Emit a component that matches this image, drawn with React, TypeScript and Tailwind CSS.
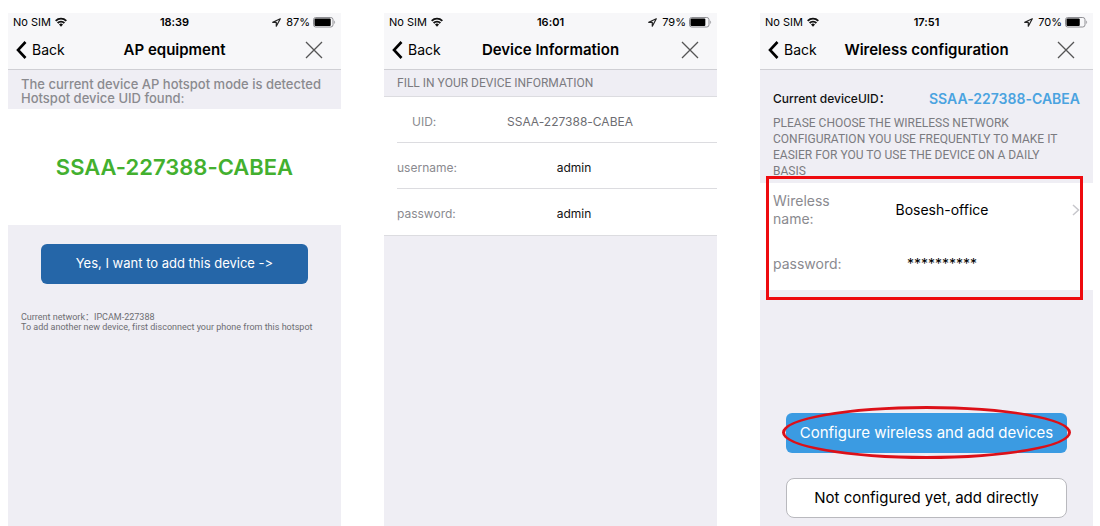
import { useState } from "react";
import type { ReactNode } from "react";

interface PhoneProps {
  time: string;
  battery: number;
  title: string;
  children: ReactNode;
}

const UID = "SSAA-227388-CABEA";

const WifiIcon = () => (
  <svg width="12" height="10" viewBox="0 0 12 10" aria-hidden="true">
    <path
      d="M0.7 3.8a7.5 7.5 0 0 1 10.6 0M2.6 6a4.8 4.8 0 0 1 6.8 0"
      fill="none"
      stroke="#111"
      strokeWidth="1.9"
    />
    <path d="M6 9.7 4 7.5a2.9 2.9 0 0 1 4 0z" fill="#111" />
  </svg>
);

const LocationIcon = () => (
  <svg width="9" height="9" viewBox="0 0 9 9" aria-hidden="true">
    <path
      d="M8.3 0.8 0.7 4.3h3.6v3.9z"
      fill="none"
      stroke="#222"
      strokeWidth="1.2"
      strokeLinejoin="round"
    />
  </svg>
);

const BatteryIcon = ({ level }: { level: number }) => (
  <svg width="23" height="11" viewBox="0 0 23 11" aria-hidden="true">
    <rect
      x="0.5"
      y="0.5"
      width="19.5"
      height="9.5"
      rx="2.2"
      fill="#f7f7f9"
      stroke="#8e8e93"
    />
    <rect x="1.5" y="1.5" width={(17.5 * level) / 100 + 1} height="7.5" rx="1" />
    <path d="M21.3 3.6c1.1.5 1.1 2.8 0 3.3z" fill="#8e8e93" />
  </svg>
);

const Phone = ({ time, battery, title, children }: PhoneProps) => (
  <section className="flex flex-col bg-[#efeef4]">
    <header className="border-b border-[#cfcfd4] bg-[#f7f7f9] text-black">
      <div className="grid h-[18px] grid-cols-[1fr_auto_1fr] items-center px-[5px] text-[11px] leading-[18px]">
        <span className="flex items-center gap-1">
          No SIM
          <WifiIcon />
        </span>
        <span className="font-semibold">{time}</span>
        <span className="flex items-center justify-end gap-[3px]">
          <LocationIcon />
          <span className="pl-[2px]">{battery}%</span>
          <BatteryIcon level={battery} />
        </span>
      </div>
      <div className="grid h-[38px] grid-cols-[1fr_auto_1fr] items-center px-2">
        <button
          type="button"
          className="flex items-center gap-[5px] text-[14px] leading-5"
        >
          <svg width="11" height="18" viewBox="0 0 11 18" aria-hidden="true">
            <path
              d="M9.5 1 2 9l7.5 8"
              fill="none"
              stroke="#000"
              strokeWidth="2.6"
            />
          </svg>
          Back
        </button>
        <h2 className="text-[15px] font-semibold leading-5">{title}</h2>
        <button
          type="button"
          aria-label="Close"
          className="justify-self-end pr-[10px]"
        >
          <svg width="18" height="18" viewBox="0 0 18 18" aria-hidden="true">
            <path
              d="M1 1l16 16M17 1 1 17"
              fill="none"
              stroke="#555"
              strokeWidth="1.3"
            />
          </svg>
        </button>
      </div>
    </header>
    {children}
  </section>
);

const ApEquipment = () => (
  <Phone time="18:39" battery={87} title="AP equipment">
    <p className="px-[13px] pb-[4px] pt-[7px] text-[13px] font-medium leading-[14px] text-[#8a8a8f]">
      The current device AP hotspot mode is detected
      <br />
      Hotspot device UID found:
    </p>
    <p className="bg-white py-[43px] text-center text-[22px] font-semibold leading-[30px] text-[#43b02f]">
      {UID}
    </p>
    <div className="px-[33px] pt-[19px]">
      <button
        type="button"
        className="h-10 w-full rounded-md bg-[#2566a8] text-[13px] text-white"
      >
        Yes, I want to add this device -&gt;
      </button>
    </div>
    <p className="px-[13px] pt-[28px] font-['Roboto','Noto_Sans_CJK_SC',sans-serif] text-[9px] leading-[10px] text-[#6d6d72]">
      Current network：IPCAM-227388
      <br />
      To add another new device, first disconnect your phone from this hotspot
    </p>
  </Phone>
);

const DeviceInformation = () => {
  const [username, setUsername] = useState("admin");
  const [password, setPassword] = useState("admin");

  return (
    <Phone time="16:01" battery={79} title="Device Information">
      <h3 className="border-b border-[#dcdce0] px-[13px] py-1 font-['Roboto',sans-serif] text-[12px] leading-[18px] text-[#7b7b80]">
        FILL IN YOUR DEVICE INFORMATION
      </h3>
      <div className="border-b border-[#dcdce0] bg-white pl-[13px] text-[12px]">
        <div className="flex h-[46px] items-center border-b border-[#dcdce0] pt-1">
          <span className="w-[84px] pl-[15px] text-[#8a8a8f]">UID:</span>
          <output className="flex-1 pr-[58px] text-center text-[#6d6d72]">
            {UID}
          </output>
        </div>
        <div className="flex h-[46px] items-center border-b border-[#dcdce0] pt-1">
          <label htmlFor="device-username" className="w-[84px] text-[#8a8a8f]">
            username:
          </label>
          <input
            id="device-username"
            value={username}
            onChange={(e) => setUsername(e.target.value)}
            className="min-w-0 flex-1 pr-[50px] text-center text-[#111] outline-none"
          />
        </div>
        <div className="flex h-[46px] items-center pt-1">
          <label htmlFor="device-password" className="w-[84px] text-[#8a8a8f]">
            password:
          </label>
          <input
            id="device-password"
            value={password}
            onChange={(e) => setPassword(e.target.value)}
            className="min-w-0 flex-1 pr-[50px] text-center text-[#111] outline-none"
          />
        </div>
      </div>
    </Phone>
  );
};

const WirelessConfiguration = () => {
  const [network, setNetwork] = useState("Bosesh-office");
  const [password, setPassword] = useState("**********");

  return (
    <Phone time="17:51" battery={70} title="Wireless configuration">
      <div className="px-[13px] pt-[19px]">
        <div className="flex items-center justify-between leading-5">
          <span className="text-[12px] font-medium text-[#111]">
            Current deviceUID：
          </span>
          <span className="text-[14px] font-semibold text-[#4aa3e0]">
            {UID}
          </span>
        </div>
        <p className="pb-1 pr-[14px] pt-[6px] font-['Roboto',sans-serif] text-[12px] leading-4 text-[#7b7b80]">
          PLEASE CHOOSE THE WIRELESS NETWORK CONFIGURATION YOU USE FREQUENTLY TO
          MAKE IT EASIER FOR YOU TO USE THE DEVICE ON A DAILY BASIS
        </p>
      </div>
      <div className="relative bg-white px-[13px] text-[14px]">
        <div className="flex h-[53px] items-center">
          <label
            htmlFor="wireless-name"
            className="w-[84px] leading-[18px] text-[#8a8a8f]"
          >
            Wireless name:
          </label>
          <input
            id="wireless-name"
            value={network}
            onChange={(e) => setNetwork(e.target.value)}
            className="min-w-0 flex-1 pr-[21px] text-center text-black outline-none"
          />
          <button type="button" aria-label="Choose network" className="pl-[24px]">
            <svg width="8" height="12" viewBox="0 0 8 12" aria-hidden="true">
              <path
                d="M1 1l5.5 5L1 11"
                fill="none"
                stroke="#c7c7cc"
                strokeWidth="1.5"
              />
            </svg>
          </button>
        </div>
        <div className="flex h-[54px] items-center">
          <label
            htmlFor="wireless-password"
            className="w-[84px] text-[#8a8a8f]"
          >
            password:
          </label>
          <input
            id="wireless-password"
            value={password}
            onChange={(e) => setPassword(e.target.value)}
            className="min-w-0 flex-1 pr-[53px] text-center text-black outline-none"
          />
        </div>
        <div className="pointer-events-none absolute -bottom-[10px] -top-[7px] left-[6px] right-[10px] border-[3px] border-[#ee0a0f]" />
      </div>
      <div className="mt-auto flex flex-col gap-[25px] px-[26px] pb-2 text-[15px]">
        <div className="relative">
          <button
            type="button"
            className="h-10 w-full rounded-md bg-[#3b9be2] text-white"
          >
            Configure wireless and add devices
          </button>
          <div className="pointer-events-none absolute -inset-x-1 -bottom-[6px] -top-[7px] rounded-[50%] border-[3px] border-[#dc1018]" />
        </div>
        <button
          type="button"
          className="h-10 w-full rounded-lg border border-[#b9b9be] bg-white text-black"
        >
          Not configured yet, add directly
        </button>
      </div>
    </Phone>
  );
};

export default function App() {
  return (
    <main className="grid min-h-screen grid-cols-3 gap-[43px] bg-white pl-2 pr-[7px] pt-[13px] font-['Inter','Noto_Sans_CJK_SC',sans-serif] [font-variant-ligatures:none]">
      <ApEquipment />
      <DeviceInformation />
      <WirelessConfiguration />
    </main>
  );
}
